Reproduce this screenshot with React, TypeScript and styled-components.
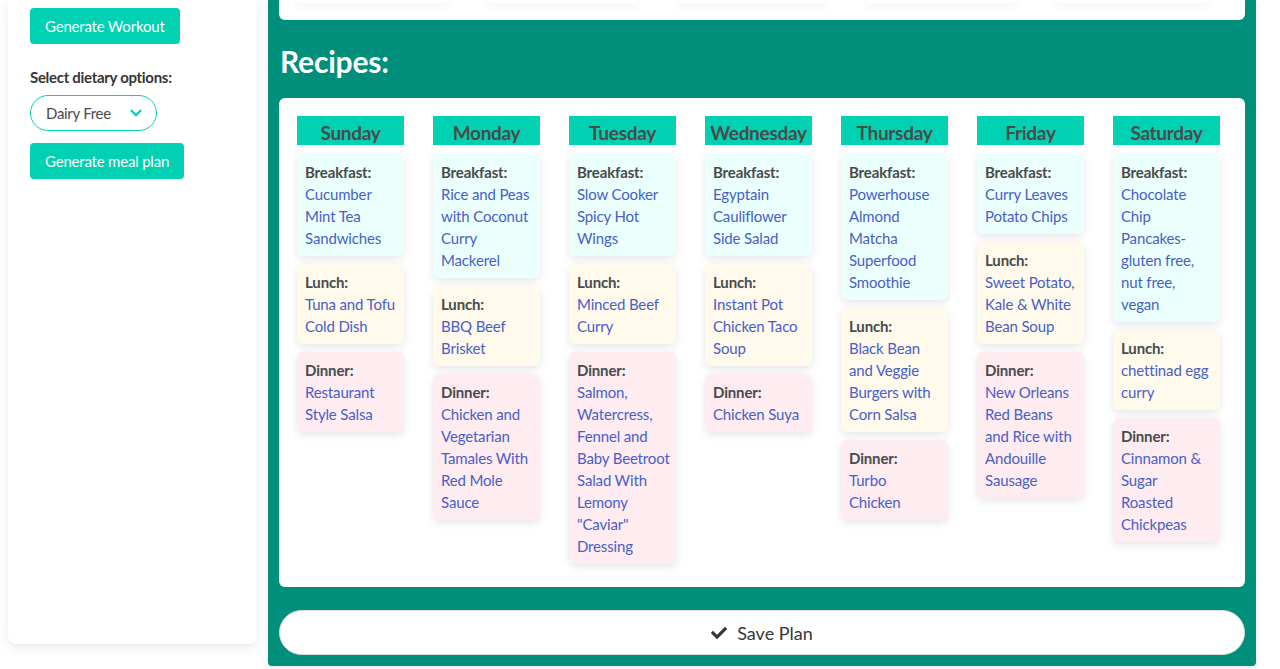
import * as React from 'react';
import styled, { createGlobalStyle } from 'styled-components';
import { FaCheck } from 'react-icons/fa';
import { ChevronDown } from 'lucide-react';

const GlobalStyle = createGlobalStyle`
  html, body {
    margin: 0;
    padding: 0;
    background: #ffffff;
    font-family: Lato, "Noto Sans", sans-serif;
    color: #4a4a4a;
    letter-spacing: -0.3px;
  }
  * { box-sizing: border-box; }
`;

type Meal = { kind: 'Breakfast' | 'Lunch' | 'Dinner'; name: string };
type Day = { day: string; meals: Meal[] };

const week: Day[] = [
  {
    day: 'Sunday',
    meals: [
      { kind: 'Breakfast', name: 'Cucumber Mint Tea Sandwiches' },
      { kind: 'Lunch', name: 'Tuna and Tofu Cold Dish' },
      { kind: 'Dinner', name: 'Restaurant Style Salsa' },
    ],
  },
  {
    day: 'Monday',
    meals: [
      { kind: 'Breakfast', name: 'Rice and Peas with Coconut Curry Mackerel' },
      { kind: 'Lunch', name: 'BBQ Beef Brisket' },
      { kind: 'Dinner', name: 'Chicken and Vegetarian Tamales With Red Mole Sauce' },
    ],
  },
  {
    day: 'Tuesday',
    meals: [
      { kind: 'Breakfast', name: 'Slow Cooker Spicy Hot Wings' },
      { kind: 'Lunch', name: 'Minced Beef Curry' },
      { kind: 'Dinner', name: 'Salmon, Watercress, Fennel and Baby\u00a0Beetroot Salad With Lemony "Caviar" Dressing' },
    ],
  },
  {
    day: 'Wednesday',
    meals: [
      { kind: 'Breakfast', name: 'Egyptain Cauliflower Side Salad' },
      { kind: 'Lunch', name: 'Instant Pot Chicken Taco Soup' },
      { kind: 'Dinner', name: 'Chicken Suya' },
    ],
  },
  {
    day: 'Thursday',
    meals: [
      { kind: 'Breakfast', name: 'Powerhouse Almond Matcha Superfood Smoothie' },
      { kind: 'Lunch', name: 'Black Bean and Veggie Burgers with Corn Salsa' },
      { kind: 'Dinner', name: 'Turbo Chicken' },
    ],
  },
  {
    day: 'Friday',
    meals: [
      { kind: 'Breakfast', name: 'Curry Leaves Potato Chips' },
      { kind: 'Lunch', name: 'Sweet Potato, Kale & White Bean Soup' },
      { kind: 'Dinner', name: 'New Orleans Red Beans and Rice with Andouille Sausage' },
    ],
  },
  {
    day: 'Saturday',
    meals: [
      { kind: 'Breakfast', name: 'Chocolate Chip Pancakes-gluten free, nut free, vegan' },
      { kind: 'Lunch', name: 'chettinad egg curry' },
      { kind: 'Dinner', name: 'Cinnamon & Sugar Roasted Chickpeas' },
    ],
  },
];

const mealColors: Record<Meal['kind'], string> = {
  Breakfast: '#ebfffc',
  Lunch: '#fffaeb',
  Dinner: '#feecf0',
};

const Page = styled.div`
  display: flex;
  align-items: flex-start;
  gap: 11px;
  padding: 0 24px 3px 8px;
`;

const Sidebar = styled.aside`
  width: 249px;
  flex-shrink: 0;
  height: 644px;
  background: #fff;
  border-radius: 0 0 8px 8px;
  box-shadow: 0 4px 12px rgba(10, 10, 10, 0.08), 0 0 2px rgba(10, 10, 10, 0.04);
  padding: 8px 22px;
  display: flex;
  flex-direction: column;
  align-items: flex-start;
`;

const Button = styled.button`
  background: #00d1b2;
  color: #fff;
  border: none;
  border-radius: 4px;
  height: 36px;
  padding: 0 15px;
  font-family: inherit;
  font-size: 15px;
  letter-spacing: -0.2px;
  cursor: pointer;
`;

const Label = styled.div`
  margin-top: 23px;
  font-size: 15px;
  font-weight: 700;
  color: #363636;
  line-height: 20px;
`;

const Select = styled.div`
  margin-top: 8px;
  width: 127px;
  height: 36px;
  border: 1px solid #00d1b2;
  border-radius: 9999px;
  display: flex;
  align-items: center;
  justify-content: space-between;
  padding: 0 11px 0 15px;
  font-size: 15px;
  color: #4a4a4a;
  margin-bottom: 12px;
`;

const Main = styled.main`
  width: 988px;
  flex-shrink: 0;
  background: #008f7a;
  border-radius: 0 0 4px 4px;
  padding: 0 11px 11px;
  box-shadow: 0 2px 6px rgba(10, 10, 10, 0.1);
`;

const TopCard = styled.div`
  height: 20px;
  background: #fff;
  border-radius: 0 0 6px 6px;
  display: flex;
  gap: 40px;
  padding: 0 18px;
  overflow: hidden;
`;

const WorkoutStub = styled.div`
  width: 150px;
  height: 3px;
  background: #fff;
  box-shadow: 0 3px 8px rgba(10, 10, 10, 0.1);
`;

const Heading = styled.h2`
  margin: 0;
  padding: 22px 1px 18px;
  font-size: 30px;
  line-height: 38px;
  font-weight: 700;
  letter-spacing: -0.2px;
  color: #fff;
`;

const RecipesCard = styled.section`
  background: #fff;
  border-radius: 6px;
  padding: 18px 25px 0 18px;
  height: 489px;
  display: flex;
  gap: 29px;
`;

const DayColumn = styled.div`
  width: 107px;
  flex-shrink: 0;
  display: flex;
  flex-direction: column;
  gap: 8px;
`;

const DayHeader = styled.div`
  height: 29px;
  background: #00d1b2;
  color: #4a4a4a;
  font-size: 19px;
  font-weight: 700;
  line-height: 33px;
  text-align: center;
  margin-bottom: 1px;
  white-space: nowrap;
`;

const MealCard = styled.div<{ $bg: string }>`
  background: ${(p) => p.$bg};
  border-radius: 6px;
  padding: 7px 8px;
  box-shadow: 0 3px 8px rgba(10, 10, 10, 0.1);
  font-size: 15px;
  line-height: 22px;
  letter-spacing: -0.15px;
`;

const MealKind = styled.div`
  font-weight: 700;
  color: #4a4a4a;
`;

const MealLink = styled.a`
  color: #485fc7;
  text-decoration: none;
`;

const SaveButton = styled.button`
  margin-top: 23px;
  width: 100%;
  height: 45px;
  background: #fff;
  border: 1px solid #dbdbdb;
  border-radius: 9999px;
  display: flex;
  align-items: center;
  justify-content: center;
  gap: 10px;
  font-family: inherit;
  font-size: 18px;
  color: #363636;
  cursor: pointer;
`;

export default function App() {
  return (
    <>
      <GlobalStyle />
      <Page>
        <Sidebar>
          <Button>Generate Workout</Button>
          <Label>Select dietary options:</Label>
          <Select>
            <span>Dairy Free</span>
            <ChevronDown size={18} strokeWidth={3} color="#00d1b2" />
          </Select>
          <Button>Generate meal plan</Button>
        </Sidebar>
        <Main>
          <TopCard>
            {[0, 1, 2, 3, 4].map((i) => (
              <WorkoutStub key={i} />
            ))}
          </TopCard>
          <Heading>Recipes:</Heading>
          <RecipesCard>
            {week.map((d) => (
              <DayColumn key={d.day}>
                <DayHeader>{d.day}</DayHeader>
                {d.meals.map((m) => (
                  <MealCard key={m.kind} $bg={mealColors[m.kind]}>
                    <MealKind>{m.kind}:</MealKind>
                    <MealLink href="#">{m.name}</MealLink>
                  </MealCard>
                ))}
              </DayColumn>
            ))}
          </RecipesCard>
          <SaveButton>
            <FaCheck size={16} />
            Save Plan
          </SaveButton>
        </Main>
      </Page>
    </>
  );
}
